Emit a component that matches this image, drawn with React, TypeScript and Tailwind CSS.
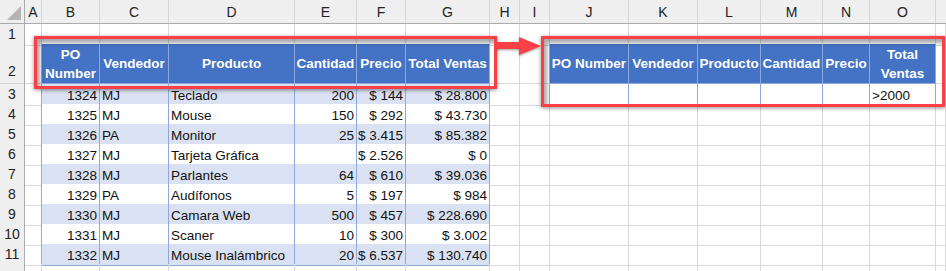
import React from 'react';

const grid =
  'grid grid-cols-[25px_17px_58px_69px_126px_62px_49px_84px_30px_30px_79px_69px_63px_62px_47px_66px_10px]';

const letters = ['A', 'B', 'C', 'D', 'E', 'F', 'G', 'H', 'I', 'J', 'K', 'L', 'M', 'N', 'O'];

const ventas = [
  ['1324', 'MJ', 'Teclado', '200', '$ 144', '$ 28.800'],
  ['1325', 'MJ', 'Mouse', '150', '$ 292', '$ 43.730'],
  ['1326', 'PA', 'Monitor', '25', '$ 3.415', '$ 85.382'],
  ['1327', 'MJ', 'Tarjeta Gráfica', '', '$ 2.526', '$ 0'],
  ['1328', 'MJ', 'Parlantes', '64', '$ 610', '$ 39.036'],
  ['1329', 'PA', 'Audífonos', '5', '$ 197', '$ 984'],
  ['1330', 'MJ', 'Camara Web', '500', '$ 457', '$ 228.690'],
  ['1331', 'MJ', 'Scaner', '10', '$ 300', '$ 3.002'],
  ['1332', 'MJ', 'Mouse Inalámbrico', '20', '$ 6.537', '$ 130.740'],
];

// columns B..G alignment
const align = ['justify-end', 'justify-start', 'justify-start', 'justify-end', 'justify-end', 'justify-end'];

const gray = 'border-r border-b border-[#dadada]';
const grayBlue = 'border-r border-b border-[#dadada] border-r-[#8ea9db]';
const head =
  'bg-[#4472c4] text-white font-bold text-[13.5px] flex items-center justify-center text-center leading-[19px] border-r border-b border-[#8ea9db] whitespace-nowrap';

const RowHead = ({ n, end }: { n: string; end?: boolean }) => (
  <div
    className={`bg-[#efefef] border-r border-b border-r-[#ababab] border-b-[#d5d5d5] flex justify-center text-[#222] ${
      end ? 'items-end pb-[1px]' : 'items-center'
    }`}
  >
    {n}
  </div>
);

export default function App() {
  return (
    <div className="relative w-[946px] h-[271px] overflow-hidden bg-white text-[14px] text-[#111] font-['Liberation_Sans',Arial,sans-serif]">
      {/* column letters */}
      <div className={`${grid} h-[24px] bg-[#efefef] border-b border-[#ababab]`}>
        <div className="relative border-r border-[#ababab]">
          <svg className="absolute right-[3px] bottom-[3px]" width="14" height="14">
            <polygon points="14,0 14,14 0,14" fill="#b4b4b4" />
          </svg>
        </div>
        {letters.map((l) => (
          <div key={l} className="flex items-center justify-center border-r border-[#d5d5d5] pt-[2px] text-[#222]">
            {l}
          </div>
        ))}
        <div />
      </div>

      {/* row 1 */}
      <div className={`${grid} h-[20px]`}>
        <RowHead n="1" />
        {Array.from({ length: 16 }).map((_, i) => (
          <div key={i} className={gray} />
        ))}
      </div>

      {/* row 2: headers */}
      <div className={`${grid} h-[40px]`}>
        <RowHead n="2" end />
        <div className={grayBlue} />
        <div className={head}>
          PO
          <br />
          Number
        </div>
        <div className={head}>Vendedor</div>
        <div className={head}>Producto</div>
        <div className={head}>Cantidad</div>
        <div className={head}>Precio</div>
        <div className={head}>Total Ventas</div>
        <div className={gray} />
        <div className={grayBlue} />
        <div className={head}>PO Number</div>
        <div className={head}>Vendedor</div>
        <div className={head}>Producto</div>
        <div className={head}>Cantidad</div>
        <div className={head}>Precio</div>
        <div className={head}>
          Total
          <br />
          Ventas
        </div>
        <div className={gray} />
      </div>

      {/* data rows */}
      {ventas.map((v, r) => {
        const band = r % 2 === 0 ? 'bg-[#d9e1f2]' : 'bg-white';
        return (
          <div key={r} className={`${grid} h-[20px]`}>
            <RowHead n={String(r + 3)} />
            <div className={grayBlue} />
            {v.map((c, i) => (
              <div
                key={i}
                className={`${band} ${align[i]} flex items-end text-[13.5px] leading-[18px] px-[2px] whitespace-nowrap border-r border-b border-[#8ea9db]`}
              >
                {c}
              </div>
            ))}
            <div className={gray} />
            <div className={r === 0 ? grayBlue : gray} />
            {r === 0 ? (
              <>
                <div className="border-r border-b border-[#8ea9db]" />
                <div className="border-r border-b border-[#8ea9db]" />
                <div className="border-r border-b border-[#8ea9db]" />
                <div className="border-r border-b border-[#8ea9db]" />
                <div className="border-r border-b border-[#8ea9db]" />
                <div className="border-r border-b border-[#8ea9db] flex items-end text-[13.5px] leading-[18px] px-[2px]">
                  &gt;2000
                </div>
              </>
            ) : (
              Array.from({ length: 6 }).map((_, i) => <div key={i} className={gray} />)
            )}
            <div className={gray} />
          </div>
        );
      })}

      {/* row 12 peek */}
      <div className={`${grid} h-[7px]`}>
        <div className="bg-[#efefef] border-r border-[#ababab]" />
        {Array.from({ length: 16 }).map((_, i) => (
          <div key={i} className="border-r border-[#dadada]" />
        ))}
      </div>

      {/* callout boxes */}
      <div className="absolute left-[34px] top-[36px] w-[463px] h-[53px] border-[3px] border-[#fa4046] shadow-[0_1px_4px_rgba(0,0,0,0.45),inset_3px_4px_4px_rgba(0,0,0,0.35)]" />
      <div className="absolute left-[541px] top-[36px] w-[404px] h-[71px] border-[3px] border-[#fa4046] shadow-[0_1px_4px_rgba(0,0,0,0.45),inset_3px_4px_4px_rgba(0,0,0,0.35)]" />

      {/* arrow */}
      <svg className="absolute left-[496px] top-[34px]" width="48" height="24" viewBox="0 0 48 24">
        <defs>
          <filter id="sh" x="-20%" y="-40%" width="140%" height="180%">
            <feDropShadow dx="0" dy="1" stdDeviation="1.2" floodColor="#000" floodOpacity="0.4" />
          </filter>
        </defs>
        <g filter="url(#sh)">
          <rect x="0" y="8" width="25" height="7" fill="#fa4046" />
          <polygon points="23,3 45,12 23,21" fill="#fa4046" />
        </g>
      </svg>
    </div>
  );
}
